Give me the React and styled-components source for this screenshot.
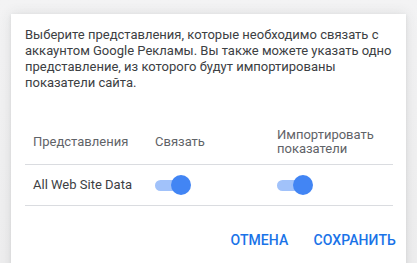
import styled, {createGlobalStyle} from 'styled-components'
import {useState} from 'react'

const GlobalStyle = createGlobalStyle`
  html, body {
    margin: 0;
    padding: 0;
    background: #f1f1f2;
  }
  body {
    font-family: Roboto, "Noto Sans", Arial, sans-serif;
    -webkit-font-smoothing: antialiased;
  }
`

const Backdrop = styled.div`
  height: 263px;
  overflow: hidden;
  padding: 14px 11px 0;
  box-sizing: border-box;
  background: linear-gradient(180deg, #f3f3f4 0%, #eeeeef 100%);
`

const Dialog = styled.div`
  background: #fff;
  height: 280px;
  box-shadow: 0 0 12px rgba(60, 64, 67, 0.12), 0 1px 3px rgba(60, 64, 67, 0.1);
  padding: 13px 14px 0;
  box-sizing: border-box;
  display: flex;
  flex-direction: column;
`

const Intro = styled.p`
  margin: 0;
  font-size: 13px;
  line-height: 16px;
  color: #3c4043;
`

const Table = styled.table`
  margin-top: 29px;
  width: 368px;
  border-collapse: collapse;
  font-size: 13px;
  color: #3c4043;
`

const Th = styled.th`
  text-align: left;
  font-weight: 400;
  color: #5f6368;
  height: 44px;
  padding: 0 0 0 8px;
  line-height: 14px;
  vertical-align: middle;
  width: ${p => p.$w}px;
  border-bottom: 1px solid #dadce0;
  box-sizing: border-box;
`

const Td = styled.td`
  height: 40px;
  padding: 0 0 0 8px;
  vertical-align: middle;
  border-bottom: 1px solid #dadce0;
`

const Track = styled.button`
  position: relative;
  display: block;
  width: 36px;
  height: 20px;
  padding: 0;
  margin: 1px 0 0;
  border: 0;
  background: transparent;
  cursor: pointer;

  &::before {
    content: '';
    position: absolute;
    left: 0;
    top: 4.5px;
    width: 32px;
    height: 11px;
    border-radius: 6px;
    background: ${p => (p.$on ? '#a1c2fa' : '#bdc1c6')};
  }

  &::after {
    content: '';
    position: absolute;
    top: 0;
    left: ${p => (p.$on ? '16px' : '0')};
    width: 20px;
    height: 20px;
    border-radius: 50%;
    background: ${p => (p.$on ? '#4285f4' : '#f1f3f4')};
    transition: left .15s ease;
  }
`

const Actions = styled.div`
  display: flex;
  justify-content: flex-end;
  gap: 9px;
  margin: 22px -12px 0 0;
`

const TextButton = styled.button`
  border: 0;
  background: transparent;
  font-family: inherit;
  font-size: 14px;
  font-weight: 500;
  letter-spacing: 0.1px;
  color: #1a73e8;
  text-transform: uppercase;
  padding: 4px 8px;
  cursor: pointer;
`

function Toggle({on, onChange}) {
  return <Track $on={on} onClick={() => onChange(!on)} aria-pressed={on} />
}

export default function App() {
  const [link, setLink] = useState(true)
  const [imp, setImp] = useState(true)

  return (
    <>
      <GlobalStyle />
      <Backdrop>
        <Dialog>
          <Intro>
            Выберите представления, которые необходимо связать с аккаунтом Google Рекламы. Вы также
            можете указать одно представление, из которого будут импортированы показатели сайта.
          </Intro>

          <Table>
            <thead>
              <tr>
                <Th $w={122}>Представления</Th>
                <Th $w={122}>Связать</Th>
                <Th $w={124}>Импортировать<br />показатели</Th>
              </tr>
            </thead>
            <tbody>
              <tr>
                <Td>All Web Site Data</Td>
                <Td><Toggle on={link} onChange={setLink} /></Td>
                <Td><Toggle on={imp} onChange={setImp} /></Td>
              </tr>
            </tbody>
          </Table>

          <Actions>
            <TextButton>Отмена</TextButton>
            <TextButton>Сохранить</TextButton>
          </Actions>
        </Dialog>
      </Backdrop>
    </>
  )
}
